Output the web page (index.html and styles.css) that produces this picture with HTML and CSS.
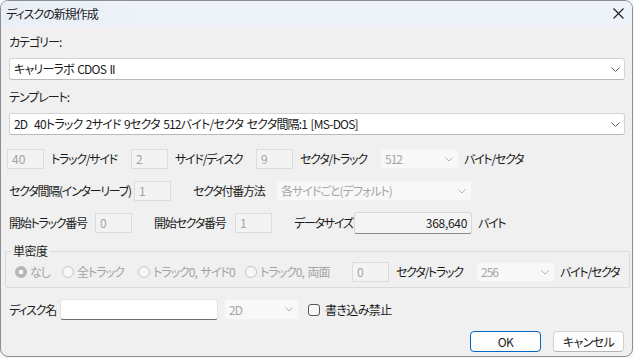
FILE: index.html
```html
<!DOCTYPE html>
<html lang="ja">
<head>
  <meta charset="UTF-8">
  <title>ディスクの新規作成</title>
  <link rel="stylesheet" href="styles.css">
</head>
<body>
  <div class="dialog">
    <div class="titlebar">
      <span class="title">ディスクの新規作成</span>
      <svg class="close" width="11" height="11" viewBox="0 0 11 11">
        <path d="M0.5 0.5 L10.5 10.5 M10.5 0.5 L0.5 10.5" stroke="#1f1f1f" stroke-width="1.1" fill="none"/>
      </svg>
    </div>

    <div class="content">
      <div class="caption">カテゴリー:</div>
      <div class="combo">
        <span>キャリーラボ CDOS II</span>
        <svg class="chev" width="9" height="5" viewBox="0 0 9 5"><path d="M0.5 0.5 L4.5 4.5 L8.5 0.5" stroke="#5c5c5c" fill="none"/></svg>
      </div>

      <div class="caption">テンプレート:</div>
      <div class="combo">
        <span>2D&nbsp; 40トラック 2サイド 9セクタ 512バイト/セクタ セクタ間隔:1 [MS-DOS]</span>
        <svg class="chev" width="9" height="5" viewBox="0 0 9 5"><path d="M0.5 0.5 L4.5 4.5 L8.5 0.5" stroke="#5c5c5c" fill="none"/></svg>
      </div>

      <div class="row row-geometry">
        <span class="field">40</span>
        <span class="lbl w87">トラック/サイド</span>
        <span class="field">2</span>
        <span class="lbl w88">サイド/ディスク</span>
        <span class="field">9</span>
        <span class="lbl w87">セクタ/トラック</span>
        <span class="select w79">512<svg class="chev" width="8" height="5" viewBox="0 0 8 5"><path d="M0.5 0.5 L4 4 L7.5 0.5" stroke="#b4b4b4" fill="none"/></svg></span>
        <span class="lbl tail">バイト/セクタ</span>
      </div>

      <div class="row">
        <span class="lbl-plain w125">セクタ間隔(インターリーブ)</span>
        <span class="field">1</span>
        <span class="lbl w105">セクタ付番方法</span>
        <span class="select w196">各サイドごと(デフォルト)<svg class="chev" width="8" height="5" viewBox="0 0 8 5"><path d="M0.5 0.5 L4 4 L7.5 0.5" stroke="#b4b4b4" fill="none"/></svg></span>
      </div>

      <div class="row row-size">
        <span class="lbl-plain w86">開始トラック番号</span>
        <span class="field">0</span>
        <span class="lbl w103">開始セクタ番号</span>
        <span class="field">1</span>
        <span class="lbl w82">データサイズ</span>
        <span class="readout">368,640</span>
        <span class="lbl tail-wide">バイト</span>
      </div>

      <fieldset class="group">
        <legend>単密度</legend>
        <div class="row">
          <span class="opt w47"><span class="radio checked"></span>なし</span>
          <span class="opt w76"><span class="radio"></span>全トラック</span>
          <span class="opt w107"><span class="radio"></span>トラック0, サイド0</span>
          <span class="opt w107"><span class="radio"></span>トラック0, 両面</span>
          <span class="field">0</span>
          <span class="lbl w87">セクタ/トラック</span>
          <span class="select w79">256<svg class="chev" width="8" height="5" viewBox="0 0 8 5"><path d="M0.5 0.5 L4 4 L7.5 0.5" stroke="#b4b4b4" fill="none"/></svg></span>
          <span class="lbl tail">バイト/セクタ</span>
        </div>
      </fieldset>

      <div class="row row-name">
        <span class="lbl-plain w51">ディスク名</span>
        <span class="textbox"></span>
        <span class="select w75 gap6">2D<svg class="chev" width="8" height="5" viewBox="0 0 8 5"><path d="M0.5 0.5 L4 4 L7.5 0.5" stroke="#b4b4b4" fill="none"/></svg></span>
        <span class="check"></span>
        <span class="check-label">書き込み禁止</span>
      </div>

      <div class="buttons">
        <button class="btn default">OK</button>
        <button class="btn">キャンセル</button>
      </div>
    </div>
  </div>
</body>
</html>
```

FILE: styles.css
```css
* {
  box-sizing: border-box;
}

body {
  margin: 0;
  background-color: #f9f9f9;
  font-family: "Noto Sans CJK JP", "Noto Sans", sans-serif;
  font-size: 12px;
  line-height: 16px;
  color: #1b1b1b;
  font-feature-settings: "palt";
}

.dialog {
  width: 633px;
  height: 357px;
  background-color: #f0f0f0;
  border: 1px solid #8e8e8e;
  border-radius: 8px;
  overflow: hidden;
}

.titlebar {
  height: 25px;
  display: flex;
  align-items: center;
  justify-content: space-between;
  padding: 0 8px 0 5px;
  background: linear-gradient(90deg, #e9eff6, #eef3fa 25%);
}

.title {
  letter-spacing: -1px;
}

.content {
  padding: 0 7px 0 8px;
}

.caption {
  margin-top: 8px;
  height: 16px;
  letter-spacing: -1px;
}

.caption + .combo {
  margin-top: 8px;
}

.combo {
  height: 22px;
  display: flex;
  align-items: center;
  justify-content: space-between;
  padding: 0 4px 0 4px;
  background-color: #fff;
  border: 1px solid #d4d4d4;
  border-bottom-color: #b9b9b9;
  border-radius: 3px;
  letter-spacing: -0.8px;
  word-spacing: 1.5px;
}

.combo + .caption {
  margin-top: 9px;
}

.row {
  display: flex;
  align-items: center;
  height: 20px;
  margin-top: 12px;
  white-space: nowrap;
}

.row-geometry {
  margin-top: 14px;
  margin-left: -2px;
}

.row-size {
  margin-top: 11px;
  height: 22px;
}

.row-name {
  margin-top: 11px;
  height: 21px;
}

.field {
  width: 37px;
  height: 20px;
  flex: none;
  padding-left: 4px;
  display: flex;
  align-items: center;
  color: #a3a3a3;
  background-color: #f3f3f3;
  border: 1px solid #dcdcdc;
}

.lbl {
  flex: none;
  padding-left: 7px;
  letter-spacing: -1.25px;
}

.lbl-plain {
  flex: none;
  letter-spacing: -1.25px;
}

.w51 { width: 51px; }
.w82 { width: 82px; padding-left: 22px; }
.w86 { width: 86px; }
.w87 { width: 87px; }
.w88 { width: 88px; }
.w103 { width: 103px; padding-left: 22px; }
.w105 { width: 105px; padding-left: 22px; }
.w125 { width: 125px; }

.tail {
  padding-left: 5px;
}

.tail-wide {
  padding-left: 6px;
}

.select {
  flex: none;
  height: 20px;
  display: flex;
  align-items: center;
  justify-content: space-between;
  padding: 0 5px 0 4px;
  color: #a6a6a6;
  background-color: #f8f8f8;
  border: 1px solid #f1f1f1;
  border-radius: 3px;
  letter-spacing: -1px;
}

.select.w79 { width: 79px; }
.select.w196 { width: 196px; }
.select.w75 { width: 75px; }

.gap6 {
  margin-left: 6px;
  height: 21px;
}

.readout {
  width: 118px;
  height: 22px;
  flex: none;
  display: flex;
  align-items: center;
  justify-content: flex-end;
  padding-right: 4px;
  background-color: #f4f4f4;
  border: 1px solid #d9d9d9;
  border-bottom-color: #8a8a8a;
  border-radius: 3px;
  letter-spacing: -0.3px;
}

.group {
  margin: 9px -5px 0 -4px;
  padding: 3px 8px 5px 9px;
  border: 1px solid #dadada;
  border-radius: 2px;
}

.group legend {
  padding: 0 2px;
  margin-left: -4px;
  line-height: 16px;
  letter-spacing: -0.5px;
}

.group .row {
  margin-top: 0;
}

.opt {
  flex: none;
  display: flex;
  align-items: center;
  gap: 3px;
  color: #a3a3a3;
  letter-spacing: -1px;
  word-spacing: 2px;
}

.opt.w47 { width: 47px; }
.opt.w76 { width: 76px; }
.opt.w107 { width: 107px; }

.radio {
  width: 12px;
  height: 12px;
  flex: none;
  border: 1px solid #c4c4c4;
  border-radius: 50%;
  background-color: #f7f7f7;
}

.radio.checked {
  border-color: #b6b6b6;
  background: radial-gradient(circle, #fafafa 0 2px, #b6b6b6 2.6px);
}

.textbox {
  width: 158px;
  height: 21px;
  flex: none;
  background-color: #fff;
  border: 1px solid #e2e2e2;
  border-bottom-color: #6e6e6e;
  border-radius: 3px;
}

.check {
  width: 12px;
  height: 12px;
  flex: none;
  margin-left: 9px;
  border: 1px solid #555;
  border-radius: 3px;
  background-color: #f7f7f7;
}

.check-label {
  margin-left: 5px;
  letter-spacing: -0.6px;
}

.buttons {
  display: flex;
  justify-content: flex-end;
  gap: 12px;
  margin-top: 11px;
  padding-right: 1px;
}

.btn {
  width: 71px;
  height: 21px;
  padding: 0;
  font: inherit;
  color: #1b1b1b;
  background-color: #fdfdfd;
  border: 1px solid #d0d0d0;
  border-bottom-color: #b4b4b4;
  border-radius: 4px;
  letter-spacing: -0.6px;
}

.btn.default {
  border: 1px solid #0067c0;
}
```
